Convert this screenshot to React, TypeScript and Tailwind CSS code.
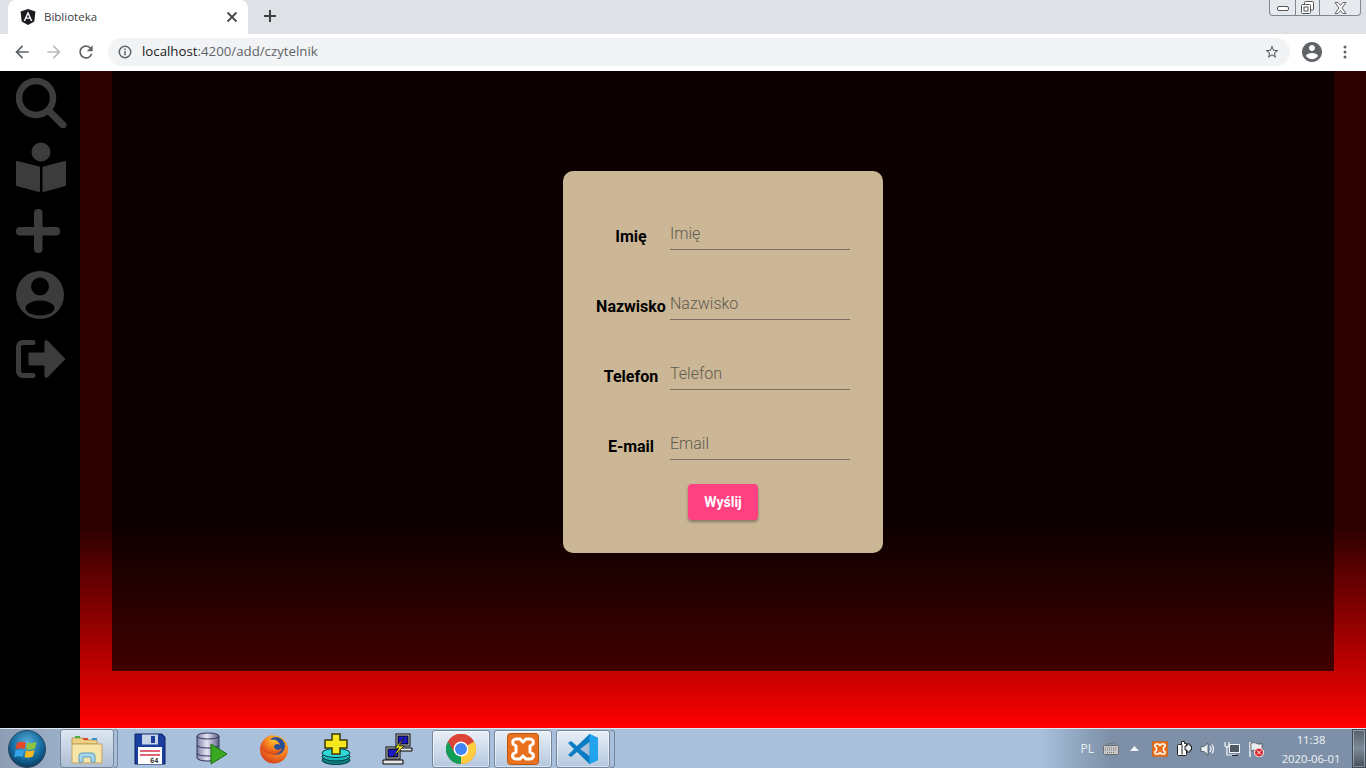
const fields = [
  { label: 'Imię', placeholder: 'Imię' },
  { label: 'Nazwisko', placeholder: 'Nazwisko' },
  { label: 'Telefon', placeholder: 'Telefon' },
  { label: 'E-mail', placeholder: 'Email' },
];

function TabStrip() {
  return (
    <div className="flex h-[34px] items-end bg-[#dee1e6] pl-2 [font-family:'Open_Sans',sans-serif]">
      <div className="relative flex h-[34px] w-[240px] items-center rounded-t-lg bg-white pl-3 pr-2">
        <svg width="16" height="16" viewBox="0 0 16 16">
          <path d="M8 0 .6 2.6l1.1 9.8L8 16l6.3-3.6 1.1-9.8z" fill="#1c1c20" />
          <path d="M8 2.2 3.6 12h1.6l.9-2.200h3.800l.9 2.200h1.600zm-1.300 6.300L8 5.500l1.300 3z" fill="#fff" />
        </svg>
        <span className="ml-2 flex-1 text-[11.5px] text-[#3c4043]">Biblioteka</span>
        <svg width="16" height="16" viewBox="0 0 16 16" stroke="#45494d" strokeWidth="1.800">
          <path d="m3.500 3.500 9 9m0-9-9 9" />
        </svg>
      </div>
      <svg className="mb-[10px] ml-[14px]" width="16" height="16" viewBox="0 0 16 16" stroke="#3c4043" strokeWidth="2">
        <path d="M8 2v12M2 8h12" />
      </svg>
      <div className="mb-[18px] ml-auto mr-[5px] flex h-4 w-[92px] self-start rounded-b-[4px] border border-t-0 border-[#7e8690] bg-[#e6e9ee]">
        <div className="flex w-[25px] items-end justify-center pb-1">
          <div className="h-[5px] w-[12px] rounded-[2px] border border-[#555] bg-white" />
        </div>
        <div className="flex w-[25px] items-center justify-center border-x border-[#7e8690]">
          <svg width="13" height="13" viewBox="0 0 13 13" fill="#fff" stroke="#555">
            <rect x="3.500" y=".5" width="9" height="8.500" rx="1" />
            <rect x=".5" y="3.500" width="9" height="9" rx="1" />
            <rect x="3" y="6" width="4" height="4" />
          </svg>
        </div>
        <div className="flex flex-1 items-center justify-center">
          <svg width="13" height="12" viewBox="0 0 13 12" fill="#fff" stroke="#666">
            <path d="M1 .5h3l2.500 3 2.500-3h3l-4 5.500 4 5.500h-3l-2.500-3-2.500 3h-3l4-5.500z" />
          </svg>
        </div>
      </div>
    </div>
  );
}

function Toolbar() {
  return (
    <div className="flex h-[37px] items-center bg-white pb-px pl-3 [font-family:'Open_Sans',sans-serif]">
      <svg width="20" height="20" viewBox="0 0 24 24" fill="#5f6368">
        <path d="M20 11H7.830l5.590-5.590L12 4l-8 8 8 8 1.410-1.410L7.830 13H20v-2z" />
      </svg>
      <svg className="ml-3" width="20" height="20" viewBox="0 0 24 24" fill="#b9bcbf">
        <path d="M4 11h12.170l-5.590-5.590L12 4l8 8-8 8-1.410-1.410L16.170 13H4v-2z" />
      </svg>
      <svg className="ml-3" width="20" height="20" viewBox="0 0 24 24" fill="#5f6368">
        <path d="M17.650 6.350A7.958 7.958 0 0 0 12 4c-4.420 0-7.990 3.580-7.990 8s3.570 8 7.990 8c3.730 0 6.840-2.550 7.730-6h-2.080A5.990 5.990 0 0 1 12 18c-3.310 0-6-2.690-6-6s2.690-6 6-6c1.660 0 3.140.69 4.220 1.780L13 11h7V4l-2.350 2.350z" />
      </svg>
      <div className="ml-3 flex h-7 w-[1182px] items-center rounded-full bg-[#f1f3f4] pl-[10px] pr-[10px]">
        <svg width="14" height="14" viewBox="0 0 14 14" fill="none" stroke="#5f6368" strokeWidth="1.500">
          <circle cx="7" cy="7" r="5.750" />
          <path d="M7 6v4.200M7 3.600v1.400" />
        </svg>
        <span className="ml-[10px] flex-1 text-[13.25px] text-[#5f6368]">
          <span className="text-[#202124]">localhost</span>:4200/add/czytelnik
        </span>
        <svg width="16" height="16" viewBox="0 0 24 24" fill="#5f6368">
          <path d="M22 9.240l-7.190-.62L12 2 9.190 8.630 2 9.240l5.460 4.730L5.820 21 12 17.270 18.180 21l-1.630-7.030L22 9.240zM12 15.400l-3.760 2.270 1-4.280-3.320-2.880 4.380-.38L12 6.100l1.710 4.040 4.380.38-3.320 2.880 1 4.280L12 15.400z" />
        </svg>
      </div>
      <svg className="ml-[10px]" width="24" height="24" viewBox="0 0 24 24" fill="#5f6368">
        <path d="M12 2C6.480 2 2 6.480 2 12s4.480 10 10 10 10-4.480 10-10S17.520 2 12 2zm0 3c1.660 0 3 1.340 3 3s-1.340 3-3 3-3-1.340-3-3 1.340-3 3-3zm0 14.200c-2.500 0-4.710-1.280-6-3.220.03-1.990 4-3.080 6-3.080 1.990 0 5.970 1.090 6 3.080-1.290 1.940-3.500 3.220-6 3.220z" />
      </svg>
      <svg className="ml-[19px]" width="4" height="14" viewBox="0 0 4 14" fill="#5f6368">
        <circle cx="2" cy="2" r="1.500" />
        <circle cx="2" cy="7" r="1.500" />
        <circle cx="2" cy="12" r="1.500" />
      </svg>
    </div>
  );
}

function Sidebar() {
  return (
    <aside className="flex w-20 shrink-0 flex-col bg-black pl-4 pt-[7px]">
      <svg width="51" height="50" viewBox="0 0 51 50" fill="none" stroke="#3c3c3c">
        <circle cx="20" cy="20" r="17" strokeWidth="6.500" />
        <path d="m33 33 14 14" strokeWidth="7" strokeLinecap="round" />
      </svg>
      <svg className="mt-[14px]" width="50" height="50" viewBox="0 0 50 50" fill="#3c3c3c" stroke="#3c3c3c" strokeWidth="2" strokeLinejoin="round">
        <circle cx="25" cy="10" r="8.500" />
        <path d="M1 20 23 25.500V49L1 43zM49 20 27.500 25.500V49L49 43z" />
      </svg>
      <svg className="mt-[17px]" width="44" height="44" viewBox="0 0 44 44" fill="#3c3c3c">
        <rect x="18" y="0" width="8.500" height="44" rx="4" />
        <rect x="0" y="18" width="44" height="8.500" rx="4" />
      </svg>
      <svg className="mt-[18px]" width="48" height="48" viewBox="0 0 48 48" fill="#3c3c3c">
        <circle cx="24" cy="24" r="24" />
        <circle cx="24" cy="15.500" r="9" fill="#000" />
        <ellipse cx="24" cy="37" rx="14.500" ry="7.500" fill="#000" />
      </svg>
      <svg className="mt-[21px]" width="50" height="38" viewBox="0 0 50 38" fill="#3c3c3c">
        <path d="M17 2.500H7A4.500 4.500 0 0 0 2.500 7v24A4.500 4.500 0 0 0 7 35.500h10" fill="none" stroke="#3c3c3c" strokeWidth="5" strokeLinecap="round" />
        <path d="M13 13h16V2c0-1.500 1.500-2 2.500-1L49 19 31.500 37c-1 1-2.500.5-2.500-1V25H13z" stroke="#3c3c3c" strokeLinejoin="round" />
      </svg>
    </aside>
  );
}

function FormCard() {
  return (
    <form className="flex w-[320px] flex-col rounded-[10px] bg-[#cbb795] pb-[33px] pt-[43px] font-['Roboto',sans-serif]">
      <div className="flex flex-col gap-[34px]">
        {fields.map(field => (
          <div key={field.label} className="flex h-9">
            <label className="ml-[33px] w-[70px] shrink-0 whitespace-nowrap pt-[13px] text-center text-base font-bold leading-5 text-black">
              {field.label}
            </label>
            <input
              className="ml-1 h-9 w-[180px] border-b border-[#7a6e5c] bg-transparent pt-1 text-base font-light outline-none placeholder:text-[#5f5a50]"
              placeholder={field.placeholder}
            />
          </div>
        ))}
      </div>
      <button type="button" className="mx-auto mt-6 h-9 w-[70px] rounded bg-[#ff4081] text-sm font-bold text-white shadow-[0_2px_3px_rgba(0,0,0,0.35)]">
        Wyślij
      </button>
    </form>
  );
}

function XamppIcon({ size }: { size: number }) {
  return (
    <svg width={size} height={size} viewBox="0 0 32 32">
      <rect x=".5" y=".5" width="31" height="31" rx="3" fill="#e8701f" stroke="#b9560f" />
      <path d="M9 6h4l3 3 3-3h4c3 0 4 3 3 5l-3 2v6l3 2c1 2 0 5-3 5h-4l-3-3-3 3H9c-3 0-4-3-3-5l3-2v-6l-3-2c-1-2 0-5 3-5z" fill="none" stroke="#fff" strokeWidth="3" />
    </svg>
  );
}

function TaskSlot({ children }: { children: React.ReactNode }) {
  return (
    <div className="flex h-[38px] w-[62px] items-center justify-center self-end">
      {children}
    </div>
  );
}

const pinnedActive = 'flex h-[38px] items-center justify-center self-end rounded-[3px] border border-[#75879c] bg-gradient-to-b from-[#e9eff6] to-[#b4c8df] shadow-[inset_0_0_0_1px_rgba(255,255,255,0.5)]';

function Taskbar() {
  return (
    <footer className="flex h-10 items-stretch border-t border-[#dfe8f2] bg-[linear-gradient(90deg,#8c9db3_0,#a8c0dc_120px,#a8c0dc_1040px,#7d90a7_1110px,#7d90a7_100%)] font-['Open_Sans',sans-serif]">
      {/* start orb */}
      <div className="ml-2 flex w-[38px] items-center">
        <svg width="38" height="38" viewBox="0 0 38 38">
          <defs>
            <radialGradient id="orb" cx="50%" cy="35%" r="70%">
              <stop offset="0" stopColor="#5fb2e0" />
              <stop offset="0.6" stopColor="#12699c" />
              <stop offset="1" stopColor="#0a2f50" />
            </radialGradient>
          </defs>
          <circle cx="19" cy="19" r="18.500" fill="url(#orb)" stroke="#2b4660" />
          <path d="M9 13q4-2 9-.5l-1.500 6.500q-4-1.500-9 0z" fill="#e5492a" />
          <path d="M19.500 12.500q4 1.500 9-.5L27 18.500q-5 2-9 .5z" fill="#8cc63f" />
          <path d="M7.500 20.500q4-1.500 8.500 0l-1.500 6.500q-4-1.500-8.500.5z" fill="#36a5e8" />
          <path d="M18 20.500q4 1.500 8.500-.5L25 26.500q-5 2-8.500.5z" fill="#f8b81f" />
        </svg>
      </div>
      {/* explorer */}
      <div className="ml-[14px] flex h-[39px] w-[54px] items-center justify-center rounded-[3px] border border-[#75879c] bg-gradient-to-b from-[#dce6f1] to-[#aebfd4]">
        <svg width="32" height="30" viewBox="0 0 32 30">
          <path d="M1 4h11l2 2h12v4H1z" fill="#eed183" stroke="#b99a55" />
          <rect x="4" y="2" width="5" height="2" fill="#4bb04b" />
          <rect x="12" y="4" width="5" height="2" fill="#d9483b" />
          <rect x="21" y="4" width="5" height="2" fill="#3c8fd9" />
          <path d="M1 10h30v19H1z" fill="#f6e4a8" stroke="#c2a35c" />
          <path d="M8 28v-6q0-3 3-3h10q3 0 3 3v6h-4v-5h-8v5z" fill="#a6d5ec" stroke="#5f9dc2" />
        </svg>
      </div>
      <div className="mr-[1px] h-[39px] w-1 rounded-r-[3px] border border-l-0 border-[#75879c]" />
      <TaskSlot>
        <svg width="32" height="32" viewBox="0 0 32 32">
          <path d="M1 1h27l3 3v27H1z" fill="#1b3f9f" stroke="#0d2060" />
          <rect x="8" y="1.500" width="16" height="10" fill="#c7d3e6" />
          <rect x="17" y="3" width="4" height="7" fill="#1b3f9f" />
          <rect x="4" y="14" width="24" height="17" fill="#fff" />
          <path d="M6 18h20M6 22h20" stroke="#d6324b" strokeWidth="1.500" />
          <text x="16" y="30" fontFamily="'DejaVu Sans Mono',monospace" fontSize="7" fontWeight="700" fill="#333">64</text>
        </svg>
      </TaskSlot>
      <TaskSlot>
        <svg width="32" height="34" viewBox="0 0 32 34">
          <defs>
            <linearGradient id="db" x1="0" x2="1" y1="0" y2="0">
              <stop offset="0" stopColor="#7d7fa8" />
              <stop offset="0.45" stopColor="#e6e6f2" />
              <stop offset="1" stopColor="#5c5e88" />
            </linearGradient>
          </defs>
          <path d="M1 4c0-4 22-4 22 0v22c0 4-22 4-22 0z" fill="url(#db)" stroke="#33355f" />
          <path d="M1 4c0 4 22 4 22 0M1 13c0 4 22 4 22 0M1 21c0 4 22 4 22 0" fill="none" stroke="#33355f" />
          <path d="M15 12v20l16-10z" fill="#3aa821" stroke="#1e6e10" />
        </svg>
      </TaskSlot>
      <TaskSlot>
        <svg width="30" height="30" viewBox="0 0 30 30">
          <defs>
            <radialGradient id="fx" cx="65%" cy="25%" r="85%">
              <stop offset="0" stopColor="#ffcb2f" />
              <stop offset="0.55" stopColor="#f47a1f" />
              <stop offset="1" stopColor="#d3361c" />
            </radialGradient>
          </defs>
          <circle cx="15" cy="15.500" r="14" fill="url(#fx)" />
          <circle cx="17" cy="12" r="9" fill="#2b4f95" />
          <path d="M2 13C4 5 9 1 14 1c-2 2-3 4-2 5 4-1 8 1 9 5-2-2-5-1-6 1 0 4 5 5 8 2-1 5-7 8-12 6C6 19 3 16 2 13z" fill="url(#fx)" />
        </svg>
      </TaskSlot>
      <TaskSlot>
        <svg width="30" height="32" viewBox="0 0 30 32">
          <ellipse cx="15" cy="27" rx="14" ry="4.500" fill="#0d7f86" stroke="#053a40" />
          <ellipse cx="15" cy="23.500" rx="14" ry="4.500" fill="#17b6bd" stroke="#053a40" />
          <ellipse cx="15" cy="20" rx="14" ry="4.500" fill="#2fd7d9" stroke="#053a40" />
          <path d="M11 1h8v6h7v8h-7v6h-8v-6H4V7h7z" fill="#f4e81c" stroke="#3d3a00" strokeWidth="1.500" />
        </svg>
      </TaskSlot>
      <TaskSlot>
        <svg width="32" height="32" viewBox="0 0 32 32" stroke="#000">
          <rect x="14" y="1" width="14" height="12" fill="#d9d9d9" />
          <rect x="16" y="3" width="10" height="8" fill="#1a1ac0" />
          <path d="M12 15h18v3H12z" fill="#e6e6e6" />
          <rect x="4" y="14" width="14" height="12" fill="#d9d9d9" />
          <rect x="6" y="16" width="10" height="8" fill="#1a1ac0" />
          <path d="M1 27h20v4H1z" fill="#e6e6e6" />
          <path d="m22 5-9 10h4l-6 9 11-11h-5z" fill="#f6e81f" strokeWidth=".6" />
        </svg>
      </TaskSlot>
      <div className={`ml-[3px] mr-[4px] w-[58px] ${pinnedActive}`}>
        <svg width="30" height="30" viewBox="0 0 30 30">
          <circle cx="15" cy="15" r="15" fill="#db4437" />
          <path d="M15 15 2 7.500A15 15 0 0 0 15 30z" fill="#0f9d58" />
          <path d="M15 15v15A15 15 0 0 0 28 7.500z" fill="#ffcd40" />
          <path d="M15 7.500h13A15 15 0 0 0 2 7.500l6.500 11.200z" fill="#db4437" />
          <circle cx="15" cy="15" r="7.500" fill="#fff" />
          <circle cx="15" cy="15" r="6" fill="#4285f4" />
        </svg>
      </div>
      <div className={`mr-[4px] w-[58px] ${pinnedActive}`}>
        <XamppIcon size={32} />
      </div>
      <div className={`w-[54px] ${pinnedActive}`}>
        <svg width="32" height="32" viewBox="0 0 32 32">
          <path d="M22.500 1 31 5v22l-8.500 4L10 19l-6 5-3-2 6-6-6-6 3-2 6 5z" fill="#0a7cc4" />
          <path d="M22.500 1 31 5v22l-8.500 4z" fill="#22a3ee" />
          <path d="M22.500 9v14L13 16z" fill="#a8c0dc" />
        </svg>
      </div>
      <div className="h-[38px] w-[5px] self-end rounded-r-[3px] border border-l-0 border-[#75879c]" />

      <div className="ml-auto flex items-center text-white">
        <span className="text-xs text-[#e4ebf3]">PL</span>
        <svg className="ml-[9px]" width="16" height="13" viewBox="0 0 16 13">
          <rect x=".5" y="3.500" width="15" height="9" rx="1" fill="#c9c9c9" stroke="#6d6d6d" />
          <path d="M2 6h12M2 8h12M4 10.500h8" stroke="#777" strokeDasharray="1 1" />
          <path d="M4 3q0-2 4-1.500T12 0" fill="none" stroke="#777" />
        </svg>
        <svg className="ml-[11px]" width="9" height="5" viewBox="0 0 9 5" fill="#f2f5f8">
          <path d="M4.500 0 9 5H0z" />
        </svg>
        <div className="ml-[13px] flex">
          <XamppIcon size={16} />
        </div>
        <svg className="ml-2" width="16" height="17" viewBox="0 0 16 17" fill="#fff" stroke="#222">
          <path d="M1.500 5.500a1 1 0 0 1 1-1h3v-3h3v2h2v11a1 1 0 0 1-1 1h-7a1 1 0 0 1-1-1z" />
          <path d="M6 4.500v10" />
          <path d="M9 6h2V4h3v2h1.500v4H14v2h-3v-2H9z" fill="#e9eef3" />
        </svg>
        <svg className="ml-2" width="16" height="16" viewBox="0 0 16 16" fill="#e8edf2" stroke="#47525e" strokeWidth=".8">
          <path d="M1 5.500h3l4-3.500v12l-4-3.500H1z" />
          <path d="M10 5q2 3 0 6M12 3.500q3 4.500 0 9" fill="none" stroke="#f2f5f8" strokeWidth="1.200" />
        </svg>
        <svg className="ml-2" width="16" height="16" viewBox="0 0 16 16">
          <path d="M1 1v3q0 2 2 2t2-2V1M3 6v8h9" fill="none" stroke="#f2f5f8" strokeWidth="1.200" />
          <rect x="5.500" y="3.500" width="10" height="8" fill="#4d5a66" stroke="#f2f5f8" />
          <path d="M8 14.500h6" stroke="#222" />
        </svg>
        <svg className="ml-2" width="16" height="16" viewBox="0 0 16 16">
          <path d="M2 1v15" stroke="#f2f5f8" strokeWidth="1.500" />
          <path d="M3 2q4-1 6 .5t5 0v7q-3 1-5 0T3 10z" fill="#e8edf2" stroke="#444" strokeWidth=".7" />
          <circle cx="11" cy="11.500" r="4.500" fill="#d8242c" stroke="#fff" />
          <path d="m9 9.500 4 4m0-4-4 4" stroke="#fff" />
        </svg>
        <div className="ml-[18px] flex w-[58px] flex-col items-center text-[11.25px] leading-[19px] text-[#eef3f8]">
          <span>11:38</span>
          <span className="whitespace-nowrap">2020-06-01</span>
        </div>
        <div className="ml-3 h-full w-[14px] border border-[#3c4a5a] bg-gradient-to-b from-[#56616d] via-[#7d8a98] to-[#46505c] shadow-[inset_0_0_0_1px_rgba(255,255,255,0.35)]" />
      </div>
    </footer>
  );
}

export default function App() {
  return (
    <div className="flex h-screen w-[1366px] flex-col overflow-hidden">
      <TabStrip />
      <Toolbar />
      <main className="flex h-[657px] bg-[linear-gradient(180deg,#2a0000_0,#2a0000_454px,#ff0000_100%)]">
        <Sidebar />
        <div className="flex-1 px-8 pb-[57px]">
          <div className="flex h-full justify-center bg-black/[0.67] pt-[100px]">
            <div>
              <FormCard />
            </div>
          </div>
        </div>
      </main>
      <Taskbar />
    </div>
  );
}
